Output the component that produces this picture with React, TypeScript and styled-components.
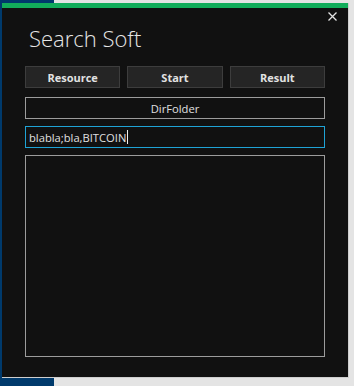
import React from "react";
import styled, { createGlobalStyle } from "styled-components";

const GlobalStyle = createGlobalStyle`
  html, body {
    margin: 0;
    padding: 0;
  }
  body {
    width: 354px;
    height: 386px;
    overflow: hidden;
    background: linear-gradient(to right, #003a6c 0, #003a6c 54px, #e4e4e4 54px);
    font-family: "Open Sans", "Noto Sans", sans-serif;
  }
`;

const Desktop = styled.div`
  display: flex;
  padding: 3px 5px 0 2px;
  height: 386px;
  box-sizing: border-box;
`;

const Window = styled.div`
  width: 347px;
  height: 375px;
  background: #111111;
  display: flex;
  flex-direction: column;
  border-right: 1px solid #cfcfcf;
  border-bottom: 1px solid #cfcfcf;
  box-sizing: border-box;
`;

const AccentBar = styled.div`
  height: 5px;
  background: #12ad5b;
  flex: none;
`;

const CloseRow = styled.div`
  display: flex;
  justify-content: flex-end;
  padding: 4px 11px 0 0;
  height: 9px;
`;

const CloseButton = styled.div`
  width: 9px;
  height: 9px;
  display: flex;
  svg {
    display: block;
  }
`;

const Content = styled.div`
  display: flex;
  flex-direction: column;
  padding: 0 23px 0 23px;
`;

const Title = styled.h1`
  margin: 0;
  box-sizing: border-box;
  font-family: "Open Sans", "Noto Sans", sans-serif;
  font-weight: 300;
  font-size: 22px;
  line-height: 28px;
  color: #e6e6e6;
  padding: 3px 0 0 4px;
  height: 32px;
  letter-spacing: 0;
`;

const ButtonRow = styled.div`
  display: grid;
  grid-template-columns: repeat(3, 1fr);
  gap: 7px;
  margin-top: 13px;
`;

const ActionButton = styled.div`
  height: 22px;
  box-sizing: border-box;
  background: #252525;
  border: 1px solid #3d3d3d;
  display: flex;
  align-items: center;
  justify-content: center;
  color: #e2e2e2;
  font-weight: 700;
  font-size: 11px;
`;

const Field = styled.div<{ $focused?: boolean; $align?: "left" | "center" }>`
  height: 22px;
  box-sizing: border-box;
  border: 1px solid ${(p) => (p.$focused ? "#1fa3d6" : "#9c9c9c")};
  display: flex;
  align-items: center;
  justify-content: ${(p) => (p.$align === "left" ? "flex-start" : "center")};
  padding: 0 3px;
  color: #e0e0e0;
  font-size: 11.2px;
  margin-top: ${(p) => (p.$focused ? 7 : 9)}px;
`;

const Caret = styled.span`
  display: inline-block;
  width: 1px;
  height: 14px;
  background: #f0f0f0;
  margin-left: 1px;
`;

const LogArea = styled.div`
  height: 202px;
  box-sizing: border-box;
  border: 1px solid #9c9c9c;
  margin-top: 7px;
`;

export default function App() {
  return (
    <>
      <GlobalStyle />
      <Desktop>
        <Window>
          <AccentBar />
          <CloseRow>
            <CloseButton>
              <svg width="9" height="9" viewBox="0 0 9 9">
                <path d="M0.5 0.5 L8.5 8.5 M8.5 0.5 L0.5 8.5" stroke="#e4e4e4" strokeWidth="1.3" />
              </svg>
            </CloseButton>
          </CloseRow>
          <Content>
            <Title>Search Soft</Title>
            <ButtonRow>
              <ActionButton>Resource</ActionButton>
              <ActionButton>Start</ActionButton>
              <ActionButton>Result</ActionButton>
            </ButtonRow>
            <Field>DirFolder</Field>
            <Field $focused $align="left">
              blabla;bla,BITCOIN
              <Caret />
            </Field>
            <LogArea />
          </Content>
        </Window>
      </Desktop>
    </>
  );
}
